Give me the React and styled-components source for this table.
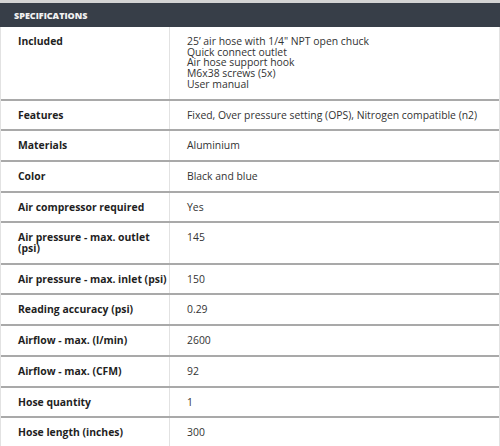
import React from 'react';
import styled, { createGlobalStyle } from 'styled-components';

const GlobalStyle = createGlobalStyle`
  body {
    margin: 0;
    background: #ffffff;
    font-family: "Open Sans", "Liberation Sans", sans-serif;
  }
`;

const Wrapper = styled.div`
  width: 500px;
  border-top: 3px solid #d4d4d4;
`;

const Header = styled.div`
  height: 24px;
  padding: 0 14px;

  display: flex;
  align-items: center;

  background: #373e48;
  color: #f2f2f2;

  font-size: 9px;
  font-weight: 800;
  text-transform: uppercase;
`;

const Table = styled.div`
  border-left: 1px solid #e2e2e2;
  border-right: 1px solid #e2e2e2;
`;

const Row = styled.div`
  display: grid;
  grid-template-columns: 169px 1fr;

  border-bottom: 2px solid #a9a9a9;
`;

const Cell = styled.div`
  padding: 9px 17px;

  font-size: 10.4px;
  line-height: 10.7px;
  white-space: nowrap;
  color: ${props => (props.label ? '#1f1f1f' : '#333333')};
  font-weight: ${props => (props.label ? 700 : 400)};

  border-right: ${props => (props.label ? '1px solid #e2e2e2' : 'none')};
`;

const Line = styled.div``;

const specs = [
  {
    label: ['Included'],
    value: [
      '25\u2019 air hose with 1/4" NPT open chuck',
      'Quick connect outlet',
      'Air hose support hook',
      'M6x38 screws (5x)',
      'User manual',
    ],
  },
  { label: ['Features'], value: ['Fixed, Over pressure setting (OPS), Nitrogen compatible (n2)'] },
  { label: ['Materials'], value: ['Aluminium'] },
  { label: ['Color'], value: ['Black and blue'] },
  { label: ['Air compressor required'], value: ['Yes'] },
  { label: ['Air pressure - max. outlet', '(psi)'], value: ['145'] },
  { label: ['Air pressure - max. inlet (psi)'], value: ['150'] },
  { label: ['Reading accuracy (psi)'], value: ['0.29'] },
  { label: ['Airflow - max. (l/min)'], value: ['2600'] },
  { label: ['Airflow - max. (CFM)'], value: ['92'] },
  { label: ['Hose quantity'], value: ['1'] },
  { label: ['Hose length (inches)'], value: ['300'] },
];

export default function App() {
  return (
    <>
      <GlobalStyle />
      <Wrapper>
        <Header>Specifications</Header>
        <Table>
          {specs.map(spec => (
            <Row key={spec.label[0]}>
              <Cell label>
                {spec.label.map(line => (
                  <Line key={line}>{line}</Line>
                ))}
              </Cell>
              <Cell>
                {spec.value.map(line => (
                  <Line key={line}>{line}</Line>
                ))}
              </Cell>
            </Row>
          ))}
        </Table>
      </Wrapper>
    </>
  );
}
